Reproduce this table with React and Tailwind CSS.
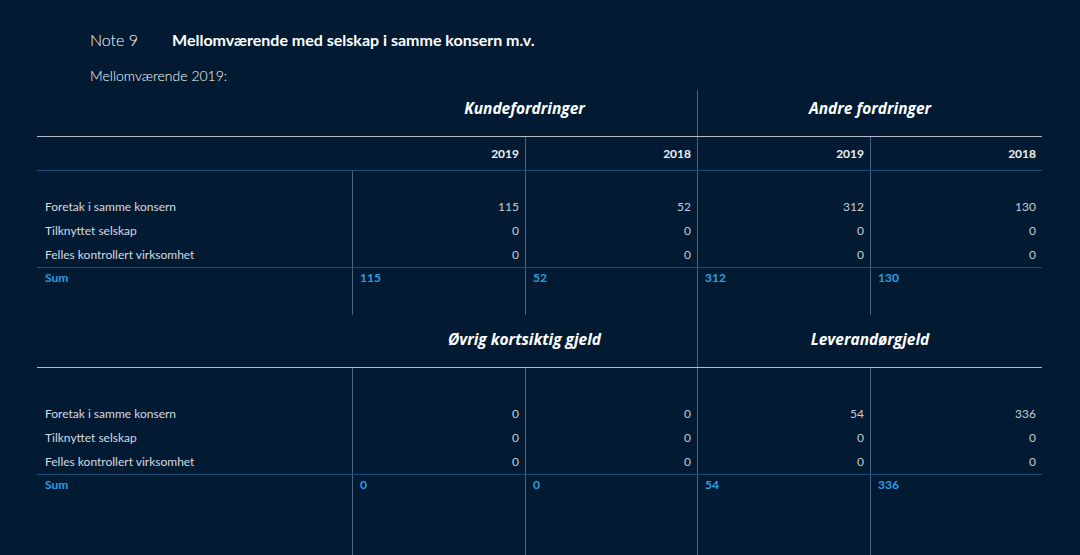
import React from "react";

const font = { fontFamily: "Lato, 'Open Sans', sans-serif" };
const headFont = { fontFamily: "'Open Sans', Lato, sans-serif" };

const rowsA = [
  ["Foretak i samme konsern", "115", "52", "312", "130"],
  ["Tilknyttet selskap", "0", "0", "0", "0"],
  ["Felles kontrollert virksomhet", "0", "0", "0", "0"],
];
const sumA = ["115", "52", "312", "130"];

const rowsB = [
  ["Foretak i samme konsern", "0", "0", "54", "336"],
  ["Tilknyttet selskap", "0", "0", "0", "0"],
  ["Felles kontrollert virksomhet", "0", "0", "0", "0"],
];
const sumB = ["0", "0", "54", "336"];

const grid = "grid grid-cols-[315px_173px_172px_173px_172px]";
const vline = "border-l border-[#4a6482]";

function GroupHeader({ left, right, h, pt }) {
  return (
    <div className={`grid grid-cols-[315px_345px_345px] ${h} border-b border-[#aebccb]`}>
      <div />
      <div style={headFont} className={`${pt} text-center text-[15.5px] leading-[20px] font-bold italic text-white`}>{left}</div>
      <div style={headFont} className={`${pt} ${vline} text-center text-[15.5px] leading-[20px] font-bold italic text-white`}>{right}</div>
    </div>
  );
}

function Body({ rows, sum, spacer, yearRow, sumH }) {
  return (
    <>
      {yearRow && (
        <div className={`${grid} h-[34px] border-b border-[#1f4b78]`}>
          <div />
          <div className="flex items-center justify-end pr-[6px] text-[12px] font-bold text-[#eef2f6]">2019</div>
          <div className={`${vline} flex items-center justify-end pr-[6px] text-[12px] font-bold text-[#eef2f6]`}>2018</div>
          <div className={`${vline} flex items-center justify-end pr-[6px] text-[12px] font-bold text-[#eef2f6]`}>2019</div>
          <div className={`${vline} flex items-center justify-end pr-[6px] text-[12px] font-bold text-[#eef2f6]`}>2018</div>
        </div>
      )}
      <div className={grid}>
        <div className={spacer} />
        <div className={`${spacer} ${vline}`} />
        <div className={`${spacer} ${vline}`} />
        <div className={`${spacer} ${vline}`} />
        <div className={`${spacer} ${vline}`} />
        {rows.map((r) => (
          <React.Fragment key={r[0]}>
            <div className="h-[24px] flex items-center pl-[8px] text-[12px] text-[#d3dae2]">{r[0]}</div>
            {r.slice(1).map((v, i) => (
              <div key={i} className={`h-[24px] ${vline} flex items-center justify-end pr-[6px] text-[12px] text-[#c3ccd6]`}>{v}</div>
            ))}
          </React.Fragment>
        ))}
      </div>
      <div className={`${grid} ${sumH} border-t border-[#1f4b78]`}>
        <div className="pl-[8px] pt-[2px] text-[12px] leading-[16px] font-bold text-[#2e9ee0]">Sum</div>
        {sum.map((v, i) => (
          <div key={i} className={`${vline} pl-[7px] pt-[2px] text-[12px] leading-[16px] font-bold text-[#2e9ee0]`}>{v}</div>
        ))}
      </div>
    </>
  );
}

export default function App() {
  return (
    <div className="h-[555px] w-[1080px] overflow-hidden bg-[#031b32]" style={font}>
      <div className="pt-[28px] pl-[90px] flex items-center gap-[34px] leading-[24px]">
        <span className="text-[16px] font-light text-white">Note 9</span>
        <span className="text-[16px] font-bold text-white">Mellomværende med selskap i samme konsern m.v.</span>
      </div>
      <div className="mt-[12px] pl-[90px] text-[14px] leading-[24px] font-light text-white">Mellomværende 2019:</div>
      <div className="ml-[37px] mt-[2px] w-[1005px]">
        <GroupHeader left="Kundefordringer" right="Andre fordringer" h="h-[47px]" pt="pt-[8px]" />
        <Body rows={rowsA} sum={sumA} spacer="h-[24px]" yearRow sumH="h-[48px]" />
        <GroupHeader left="Øvrig kortsiktig gjeld" right="Leverandørgjeld" h="h-[53px]" pt="pt-[14px]" />
        <Body rows={rowsB} sum={sumB} spacer="h-[34px]" sumH="h-[90px]" />
      </div>
    </div>
  );
}
